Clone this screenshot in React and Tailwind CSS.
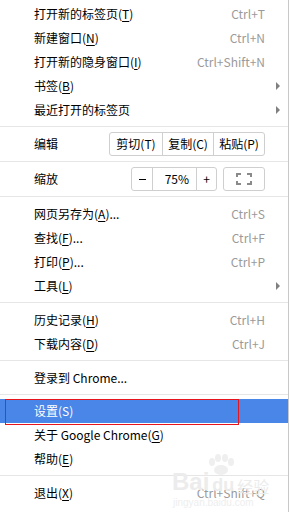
import React from "react";

const font = { fontFamily: '"Noto Sans CJK SC", "Noto Sans", sans-serif' };

const Sep = () => <div className="mt-[4px] mb-[5px] h-px bg-[#e6e6e6]" />;

const Item = ({ label, mn, after, shortcut, arrow, active, children }) => (
    <div
        className={`relative flex items-center h-6 pl-[34px] ${arrow ? 'pr-[8px]' : 'pr-[23px]'} ${
            active ? 'bg-[#4a86e8] text-white' : 'text-black'
        }`}
    >
        <span>
            {label}
            {mn && (
                <>
                    (<span className={active ? '' : 'underline underline-offset-2'}>{mn}</span>)
                </>
            )}
            {after}
        </span>
        {shortcut && <span className="ml-auto text-[#9a9a9a]">{shortcut}</span>}
        {arrow && (
            <span className="ml-auto w-0 h-0 border-y-[4px] border-y-transparent border-l-[4px] border-l-[#808080]" />
        )}
        {children}
    </div>
);

const FullscreenIcon = () => (
    <svg width="16" height="12" viewBox="0 0 16 12" fill="none" stroke="#8a8a8a" strokeWidth="2">
        <path d="M1 4V1h4M11 1h4v3M15 8v3h-4M5 11H1V8" />
    </svg>
);

export default function App() {
    return (
        <div
            className="relative w-[289px] h-[512px] overflow-hidden bg-white border-r border-[#c8c8c8] text-[12px] leading-none"
            style={font}
        >
            <div className="pt-[2px]">
                <Item label="打开新的标签页" mn="T" shortcut="Ctrl+T" />
                <Item label="新建窗口" mn="N" shortcut="Ctrl+N" />
                <Item label="打开新的隐身窗口" mn="I" shortcut="Ctrl+Shift+N" />
                <Item label="书签" mn="B" arrow />
                <Item label="最近打开的标签页" arrow />
            </div>
            <div className="mt-[4px] h-px bg-[#e6e6e6]" />

            {/* edit row */}
            <div className="flex items-center h-[34px] pl-[34px]">
                <span>编辑</span>
                <div className="ml-[51px] flex h-6 border border-[#cfcfcf] rounded-[3px]">
                    <div className="w-[53px] flex items-center justify-center border-r border-[#cfcfcf]">剪切(T)</div>
                    <div className="w-[51px] flex items-center justify-center border-r border-[#cfcfcf]">复制(C)</div>
                    <div className="w-[50px] flex items-center justify-center">粘贴(P)</div>
                </div>
            </div>
            <div className="h-px bg-[#e6e6e6]" />

            {/* zoom row */}
            <div className="flex items-center h-[34px] pl-[34px]">
                <span>缩放</span>
                <div className="ml-[73px] flex h-6 border border-[#cfcfcf] rounded-[3px]">
                    <div className="w-[21px] flex items-center justify-center border-r border-[#cfcfcf]">
                        <span className="w-[7px] h-px bg-black" />
                    </div>
                    <div className="w-[44px] flex items-center justify-end pr-[7px] border-r border-[#cfcfcf]">75%</div>
                    <div className="w-[19px] flex items-center justify-center">+</div>
                </div>
                <div className="ml-[6px] w-[42px] h-6 border border-[#cfcfcf] rounded-[3px] flex items-center justify-center">
                    <FullscreenIcon />
                </div>
            </div>
            <div className="mb-[5px] h-px bg-[#e6e6e6]" />

            <Item label="网页另存为" mn="A" after="..." shortcut="Ctrl+S" />
            <Item label="查找" mn="F" after="..." shortcut="Ctrl+F" />
            <Item label="打印" mn="P" after="..." shortcut="Ctrl+P" />
            <Item label="工具" mn="L" arrow />
            <Sep />
            <Item label="历史记录" mn="H" shortcut="Ctrl+H" />
            <Item label="下载内容" mn="D" shortcut="Ctrl+J" />
            <Sep />
            <Item label="登录到 Chrome..." />
            <div className="mt-[4px] mb-[4px] h-px bg-[#e6e6e6]" />
            <Item label="设置" mn="S" active>
                <div className="absolute left-[5px] top-0 w-[234px] h-[26px] border border-[#e8141c]" />
            </Item>
            <Item label="关于 Google Chrome" mn="G" />
            <Item label="帮助" mn="E" />
            <Sep />
            <Item label="退出" mn="X" shortcut="Ctrl+Shift+Q" />

            {/* watermark */}
            <div className="absolute left-[172px] top-[470px] flex items-end gap-[3px] text-[#ececec] pointer-events-none">
                <span className="text-[24px] font-bold leading-none" style={{ fontFamily: '"Liberation Sans", sans-serif' }}>
                    Bai
                </span>
                <span className="text-[18px] font-bold leading-none" style={{ fontFamily: '"Liberation Sans", sans-serif' }}>
                    du
                </span>
                <span className="text-[16px] leading-none">经验</span>
            </div>
            <svg className="absolute left-[204px] top-[454px]" width="34" height="22" viewBox="0 0 34 22" fill="#efefef">
                <ellipse cx="8" cy="8" rx="3" ry="4" />
                <ellipse cx="14" cy="4" rx="3" ry="4" />
                <ellipse cx="21" cy="4" rx="3" ry="4" />
                <ellipse cx="27" cy="8" rx="3" ry="4" />
                <ellipse cx="17" cy="16" rx="7" ry="5" />
            </svg>
            <div
                className="absolute left-[173px] top-[498px] text-[10px] text-[#eeeeee] leading-none"
                style={{ fontFamily: '"Liberation Sans", sans-serif' }}
            >
                jingyan.baidu.com
            </div>
        </div>
    );
}
